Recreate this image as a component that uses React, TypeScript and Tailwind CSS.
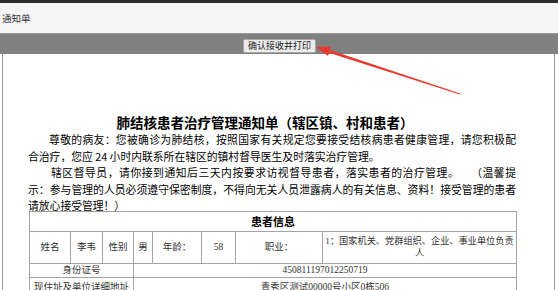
export default function App() {
  const cell = "border border-[#a3a3a3] text-center align-middle p-0";
  return (
    <div className="relative w-[558px] h-[290px] overflow-hidden bg-white font-['Noto_Sans_CJK_SC',sans-serif] text-black">
      <div className="h-[3px] bg-[#2e2e2e]" />
      <div className="h-[30px] bg-[#f5f5f5] flex items-center pl-[2px] text-[9.5px] text-[#333]">通知单</div>
      <div className="h-[21px] bg-[#808080] border-t border-[#9a9a9a] flex justify-center items-end pb-[1px] pl-[1px]">
        <button className="h-[14px] px-[4px] bg-[#ebebeb] border border-[#a8a8a8] rounded-[2px] text-[9px] leading-[12px] text-[#222]">
          确认接收并打印
        </button>
      </div>
      <div className="ml-[2px] mr-[3px] border-x border-[#9a9a9a] h-[236px] pl-[25px] pr-[38px] pt-[59px]">
        <div className="text-center text-[13.5px] font-bold leading-[18px] pr-[14px]">
          肺结核患者治疗管理通知单（辖区镇、村和患者）
        </div>
        <div className="text-[10.8px] leading-[16.5px] whitespace-nowrap">
          <div className="pl-[21px] [text-align-last:justify]">尊敬的病友：您被确诊为肺结核，按照国家有关规定您要接受结核病患者健康管理，请您积极配</div>
          <div>合治疗，您应 24 小时内联系所在辖区的镇村督导医生及时落实治疗管理。</div>
          <div className="pl-[23px] [text-align-last:justify]">辖区督导员，请你接到通知后三天内按要求访视督导患者，落实患者的治疗管理。　　（温馨提</div>
          <div className="[text-align-last:justify]">示：参与管理的人员必须遵守保密制度，不得向无关人员泄露病人的有关信息、资料！接受管理的患者</div>
          <div>请放心接受管理！）</div>
        </div>
        <table className="mt-[-3px] ml-[1px] w-[487px] table-fixed border-collapse text-[9.5px] leading-[12px] text-[#333] font-['Liberation_Serif','Noto_Sans_CJK_SC',serif]">
          <colgroup>
            <col className="w-[41px]" />
            <col className="w-[32px]" />
            <col className="w-[31px]" />
            <col className="w-[19px]" />
            <col className="w-[49px]" />
            <col className="w-[34px]" />
            <col className="w-[87px]" />
            <col className="w-[194px]" />
          </colgroup>
          <tbody>
            <tr>
              <td colSpan={8} className={`${cell} h-[20px] font-bold text-[11px] text-black font-['Noto_Sans_CJK_SC',sans-serif]`}>患者信息</td>
            </tr>
            <tr>
              <td className={`${cell} h-[32px]`}>姓名</td>
              <td className={cell}>李韦</td>
              <td className={cell}>性别</td>
              <td className={cell}>男</td>
              <td className={cell}>年龄：</td>
              <td className={cell}>58</td>
              <td className={cell}>职业：</td>
              <td className={`${cell} text-[9.2px]`}>1：国家机关、党群组织、企业、事业单位负责人</td>
            </tr>
            <tr>
              <td colSpan={3} className={`${cell} h-[14px]`}>身份证号</td>
              <td colSpan={5} className={cell}>450811197012250719</td>
            </tr>
            <tr>
              <td colSpan={3} className={`${cell} h-[20px]`}>现住址及单位详细地址</td>
              <td colSpan={5} className={cell}>青秀区测试00000号小区0栋506</td>
            </tr>
          </tbody>
        </table>
      </div>
      <svg className="absolute left-0 top-0 pointer-events-none" width="558" height="290" viewBox="0 0 558 290">
        <polygon points="316,47 331,46.6 328,56.1" fill="#e8382f" />
        <polygon points="329.8,49.9 460.2,93.5 459.8,94.5 328.8,52.7" fill="#e8382f" />
      </svg>
    </div>
  );
}
